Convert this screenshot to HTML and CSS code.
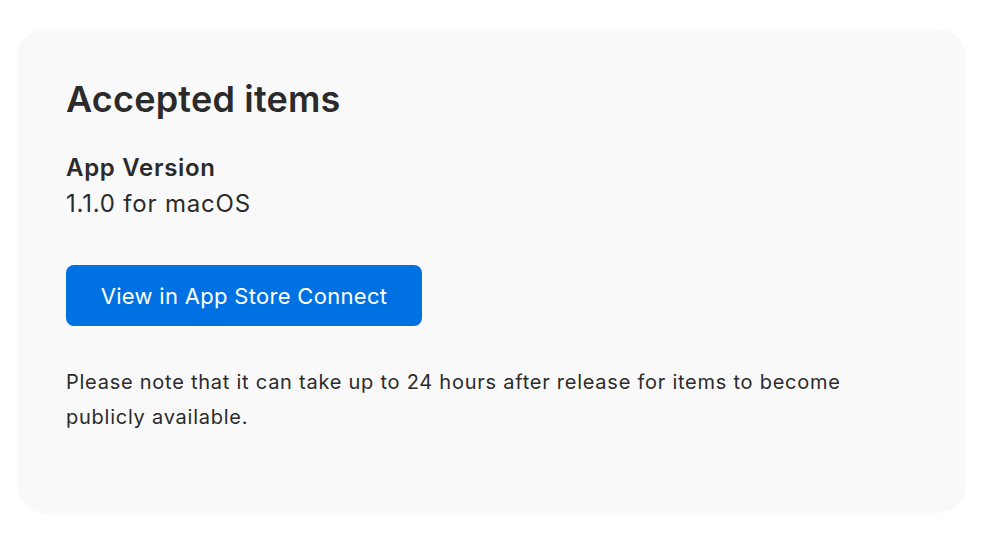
FILE: index.html
```html
<!DOCTYPE html>
<html>
<head>
<meta charset="utf-8">
<link rel="stylesheet" href="styles.css">
</head>
<body>
<div class="card">
  <h1 class="title">Accepted items</h1>
  <div class="item">
    <div class="item-label">App Version</div>
    <div class="item-value">1.1.0 for macOS</div>
  </div>
  <a class="button" href="#">View in App Store Connect</a>
  <p class="note">Please note that it can take up to 24 hours after release for items to become publicly available.</p>
</div>
</body>
</html>
```
FILE: styles.css
```css
html, body {
  margin: 0;
  padding: 0;
  background: #ffffff;
}
body {
  font-family: Inter, "Noto Sans", sans-serif;
  color: #2b2b2b;
  padding: 29px 34px 25px 17px;
}
.card {
  background: #f9f9f9;
  border-radius: 28px;
  width: 949px;
  height: 484px;
  box-sizing: border-box;
  padding: 48px 49px 0 49px;
}
.title {
  margin: 0;
  font-size: 36px;
  font-weight: 600;
  line-height: 44px;
  letter-spacing: 0.2px;
}
.item {
  margin-top: 29px;
}
.item-label {
  font-size: 24px;
  font-weight: 600;
  line-height: 36px;
  letter-spacing: 0.7px;
}
.item-value {
  font-size: 24px;
  font-weight: 400;
  line-height: 36px;
  letter-spacing: 0.8px;
}
.button {
  display: inline-flex;
  align-items: center;
  justify-content: center;
  margin-top: 43px;
  width: 356px;
  height: 61px;
  border-radius: 8px;
  background: #0071e3;
  color: #ffffff;
  text-decoration: none;
  font-size: 22px;
  font-weight: 400;
  letter-spacing: 0.3px;
}
.note {
  margin: 39px 0 0 0;
  font-size: 20px;
  line-height: 35px;
  letter-spacing: 0.75px;
  max-width: 800px;
}
```
